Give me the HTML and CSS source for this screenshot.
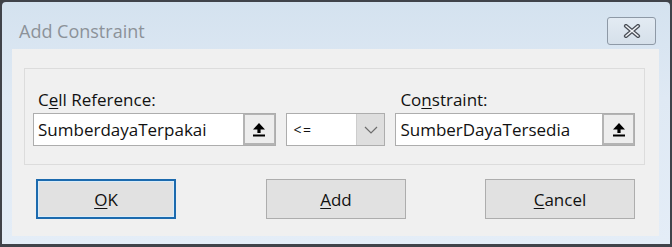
FILE: index.html
```html
<!DOCTYPE html>
<html lang="en">
<head>
    <meta charset="UTF-8">
    <title>Add Constraint</title>
    <link rel="stylesheet" href="styles.css">
</head>
<body>
    <div class="window">
        <div class="title-bar">
            <span class="title">Add Constraint</span>
            <button class="close-button" type="button">
                <svg width="20" height="14" viewBox="0 0 20 14">
                    <path d="M4 2 L16 12 M16 2 L4 12" stroke="#4a4f57" stroke-width="4.2" stroke-linecap="round"/>
                    <path d="M4 2 L16 12 M16 2 L4 12" stroke="#f2f5f8" stroke-width="1.6" stroke-linecap="round"/>
                </svg>
            </button>
        </div>

        <div class="client">
            <div class="group">
                <div class="field field-cell">
                    <label class="field-label">C<u>e</u>ll Reference:</label>
                    <div class="ref-input">
                        <span class="ref-text">SumberdayaTerpakai</span>
                        <span class="ref-button">
                            <svg width="14" height="15" viewBox="0 0 14 15">
                                <path d="M7 1 L13 7.5 L8.6 7.5 L8.6 11 L5.4 11 L5.4 7.5 L1 7.5 Z" fill="#000"/>
                                <rect x="1" y="12.5" width="12" height="2" fill="#000"/>
                            </svg>
                        </span>
                    </div>
                </div>

                <div class="field field-op">
                    <div class="combo">
                        <span class="combo-text">&lt;=</span>
                        <span class="combo-arrow">
                            <svg width="14" height="8" viewBox="0 0 14 8">
                                <path d="M1 1 L7 7 L13 1" fill="none" stroke="#6d6d6d" stroke-width="1.2"/>
                            </svg>
                        </span>
                    </div>
                </div>

                <div class="field field-constraint">
                    <label class="field-label">Co<u>n</u>straint:</label>
                    <div class="ref-input">
                        <span class="ref-text">SumberDayaTersedia</span>
                        <span class="ref-button">
                            <svg width="14" height="15" viewBox="0 0 14 15">
                                <path d="M7 1 L13 7.5 L8.6 7.5 L8.6 11 L5.4 11 L5.4 7.5 L1 7.5 Z" fill="#000"/>
                                <rect x="1" y="12.5" width="12" height="2" fill="#000"/>
                            </svg>
                        </span>
                    </div>
                </div>
            </div>

            <div class="actions">
                <button class="dialog-button default-button" type="button"><u>O</u>K</button>
                <button class="dialog-button add-button" type="button"><u>A</u>dd</button>
                <button class="dialog-button cancel-button" type="button"><u>C</u>ancel</button>
            </div>
        </div>
    </div>
</body>
</html>
```

FILE: styles.css
```css
* {
    margin: 0;
    padding: 0;
    box-sizing: border-box;
}

body {
    font-family: 'Open Sans', 'Noto Sans', sans-serif;
    background-color: #3f4246;
    width: 672px;
    height: 247px;
    overflow: hidden;
}

.window {
    width: 672px;
    height: 247px;
    border: 2px solid #40434a;
    border-bottom-width: 3px;
    border-radius: 6px 6px 0 0;
    background: linear-gradient(180deg, #d4e2ef 0%, #dfe9f4 40%, #e4edf7 100%);
    padding: 0 11px 8px 10px;
    display: flex;
    flex-direction: column;
}

.title-bar {
    height: 47px;
    display: flex;
    align-items: center;
    justify-content: space-between;
}

.title {
    color: #8c9299;
    font-size: 18px;
    margin-left: 7px;
    margin-top: 11px;
}

.close-button {
    width: 49px;
    height: 28px;
    margin-top: 10px;
    margin-right: 3px;
    border: 1px solid #8e99a6;
    border-radius: 3px;
    background: linear-gradient(180deg, #e3ebf3, #d6e0ea);
    display: flex;
    align-items: center;
    justify-content: center;
}

.client {
    flex: 1;
    background-color: #f0f0f0;
    padding: 19px 14px 0 12px;
}

.group {
    height: 97px;
    border: 1px solid #dcdcdc;
    padding: 0 9px 0 8px;
    display: flex;
    align-items: flex-end;
    padding-bottom: 18px;
}

.field {
    display: flex;
    flex-direction: column;
}

.field-label {
    font-size: 17px;
    color: #111;
    margin-left: 5px;
    margin-bottom: 2px;
    line-height: 23px;
}

.field-label u {
    text-decoration-thickness: 1px;
    text-underline-offset: 2px;
}

.field-cell {
    width: 243px;
}

.field-op {
    width: 100px;
    margin-left: 10px;
}

.field-constraint {
    width: 240px;
    margin-left: 10px;
}

.ref-input {
    height: 33px;
    border: 1px solid #adadad;
    background-color: #fff;
    display: flex;
    align-items: stretch;
}

.ref-text {
    flex: 1;
    font-size: 17px;
    color: #111;
    padding-left: 4px;
    display: flex;
    align-items: center;
}

.ref-button {
    width: 32px;
    border: 2px solid #b4b4b4;
    border-right-width: 1px;
    border-top-width: 1px;
    background-color: #ededed;
    display: flex;
    align-items: center;
    justify-content: center;
}

.combo {
    height: 33px;
    border: 1px solid #adadad;
    background-color: #fff;
    display: flex;
    align-items: stretch;
}

.combo-text {
    flex: 1;
    font-size: 14px;
    color: #111;
    padding-left: 7px;
    display: flex;
    align-items: center;
    letter-spacing: 1.5px;
}

.combo-arrow {
    width: 28px;
    background-color: #dedede;
    border-left: 1px solid #cdcdcd;
    display: flex;
    align-items: center;
    justify-content: center;
}

.actions {
    display: flex;
    margin-top: 14px;
    padding-left: 12px;
}

.dialog-button {
    height: 40px;
    width: 140px;
    border: 1px solid #adadad;
    background-color: #e1e1e1;
    font-family: 'Open Sans', 'Noto Sans', sans-serif;
    font-size: 17px;
    color: #111;
}

.dialog-button u {
    text-decoration-thickness: 1px;
    text-underline-offset: 2px;
}

.default-button {
    border: 2px solid #1c6aae;
    box-shadow: inset 0 0 0 1px #d8ecfa;
}

.add-button {
    margin-left: 90px;
}

.cancel-button {
    width: 150px;
    margin-left: 79px;
}
```
